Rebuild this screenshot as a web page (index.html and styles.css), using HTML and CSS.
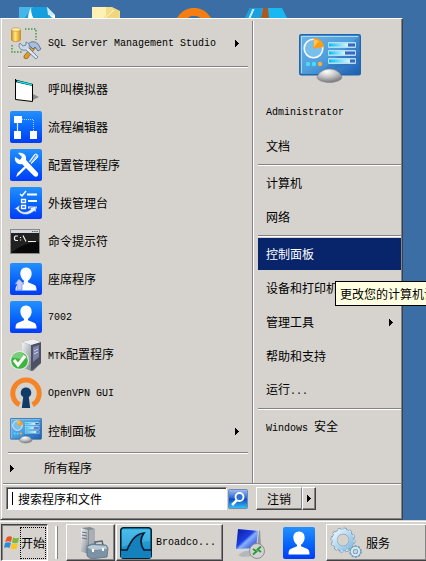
FILE: index.html
```html
<!DOCTYPE html>
<html lang="zh-CN">
<head>
<meta charset="utf-8">
<title>开始</title>
<link rel="stylesheet" href="styles.css">
</head>
<body>
<svg class="defs" aria-hidden="true">
  <defs>
    <linearGradient id="blue" x1="0" y1="0" x2="0" y2="1"><stop offset="0" stop-color="#2490ff"/><stop offset=".5" stop-color="#0868fa"/><stop offset="1" stop-color="#003cf8"/></linearGradient>
    <linearGradient id="panel" x1="0" y1="0" x2="1" y2="1"><stop offset="0" stop-color="#6fb4e6"/><stop offset=".5" stop-color="#4f9ddb"/><stop offset="1" stop-color="#1c5cae"/></linearGradient>
    <linearGradient id="bar" x1="0" y1="0" x2="1" y2="0"><stop offset="0" stop-color="#00bdf5"/><stop offset="1" stop-color="#d8fbff"/></linearGradient>
    <radialGradient id="ball" cx=".4" cy=".2" r=".8"><stop offset="0" stop-color="#fff"/><stop offset=".5" stop-color="#c4c4c6"/><stop offset="1" stop-color="#77777c"/></radialGradient>
    <linearGradient id="gold" x1="0" y1="0" x2="1" y2="0"><stop offset="0" stop-color="#cf8a10"/><stop offset=".4" stop-color="#ffe88a"/><stop offset="1" stop-color="#d59012"/></linearGradient>
    <linearGradient id="steel" x1="0" y1="0" x2="1" y2="1"><stop offset="0" stop-color="#f4f6f8"/><stop offset="1" stop-color="#7d868e"/></linearGradient>
    <linearGradient id="screen" x1="0" y1="0" x2="1" y2="1"><stop offset="0" stop-color="#0b1aa0"/><stop offset=".45" stop-color="#1c3ee0"/><stop offset=".55" stop-color="#88b0ff"/><stop offset="1" stop-color="#0a28c0"/></linearGradient>
    <linearGradient id="shark" x1="0" y1="0" x2="0" y2="1"><stop offset="0" stop-color="#36b5e8"/><stop offset="1" stop-color="#0f7fbd"/></linearGradient>
    <linearGradient id="ice" x1="0" y1="0" x2="1" y2="1"><stop offset="0" stop-color="#e6f3fb"/><stop offset="1" stop-color="#88bce0"/></linearGradient>
    <symbol id="person" viewBox="0 0 32 32">
      <rect width="32" height="32" rx="2" fill="url(#blue)"/>
      <path fill="#fff" d="M16 4.500c4 0 6 3 5.600 7-.3 3-2 5.200-3.600 6.200v1.600l6 2.400c2 .8 2.500 2.300 2.500 5.800h-21c0-3.500.5-5 2.500-5.800l6-2.400v-1.600c-1.600-1-3.300-3.200-3.600-6.200-.4-4 1.600-7 5.600-7z"/>
    </symbol>
    <symbol id="control" viewBox="0 0 62 50">
      <rect x=".75" y=".75" width="60.500" height="40" rx="1.500" fill="url(#panel)" stroke="#1f66ac" stroke-width="1.500"/>
      <path d="M2.500 39V2.500H59" fill="none" stroke="#a7d9fa"/>
      <path d="M60 2v25L20 40z" fill="#1250a0" opacity=".18"/>
      <circle cx="14.500" cy="14.500" r="9.300" fill="#79bfe9" stroke="#f4faff" stroke-width="1.600"/>
      <path d="M14.500 14.500V4c6 0 10 4 10.500 9z" fill="#ff9d12"/><path d="M15 13V5l5 2z" fill="#ffc45a"/>
      <g fill="#b5def5"><rect x="29" y="8" width="28" height="6" rx="1"/><rect x="29" y="16" width="28" height="6" rx="1"/><rect x="29" y="24" width="28" height="6" rx="1"/></g>
      <g fill="url(#bar)"><rect x="30" y="9.500" width="19" height="3"/><rect x="30" y="17.500" width="16" height="3"/><rect x="30" y="25.500" width="21" height="3"/></g>
      <path fill="#3a66c4" d="M49 9.500h7v3h-7zM46 17.500h10v3H46zM51 25.500h5v3h-5z"/>
      <circle cx="9" cy="30" r="2.200" fill="#48dcff"/><circle cx="15" cy="30" r="2.200" fill="#48dcff"/><circle cx="21" cy="30" r="2.200" fill="#ffad35"/>
      <path d="M18 43c2-5 7-8 12.500-8S41 38 43 43c0 3-6 5.500-12.500 5.500S18 46 18 43z" fill="url(#ball)" stroke="#85858a" stroke-width=".6"/>
    </symbol>
    <symbol id="arrow" viewBox="0 0 4 7"><path d="M0 0h1v1h1v1h1v1h1v1H3v1H2v1H1v1H0z"/></symbol>
  </defs>
</svg>

<main class="desktop">
  <div class="shortcuts" aria-hidden="true">
    <svg class="shortcut doc" viewBox="0 0 37 14"><path d="M0 1h28l8 8v5H0z" fill="#159fdf"/><path d="M0 1h14L4 14H0z" fill="#45b6ea"/><path d="M9 14c0-5 1-9 3-12 0 5 1 9 4 12z" fill="#fff"/><path d="M28 1l8 8v5l-5-4z" fill="#fff"/><path d="M28 1l1 8 7 1z" fill="#cfe7f5"/></svg>
    <svg class="shortcut folder" viewBox="0 0 28 12"><path d="M0 0h20l8 4v8H0z" fill="#f3dd87"/><path d="M0 0h14v12H0z" fill="#fff0b3"/><path d="M10 12L22 2l5 2v8z" fill="#efd77e"/><path d="M12 12l10-9" stroke="#fff8d8"/></svg>
    <svg class="shortcut ring" viewBox="0 0 36 12"><path d="M0 12C5 2 12 0 18 0s13 2 18 12H26c-3-4-5-4-8-4s-5 0-8 4z" fill="#f57e12"/></svg>
    <svg class="shortcut tool" viewBox="0 0 42 10"><path d="M5 0h32l5 10H0z" fill="#18b9f2"/><path d="M5 0h12l-1 10H0z" fill="#1c9fdd"/><path d="M8 1L4 10M9 1L5 10" stroke="#e6faff" stroke-width="1"/><path d="M18 0h5l1 10h-8z" fill="#ad5823"/></svg>
  </div>

  <section class="menu" aria-label="开始菜单">
    <div class="columns">
      <nav class="programs" aria-label="程序">
        <a class="program" href="#ssms">
          <svg class="icon" viewBox="0 0 32 32">
            <path d="M15 2h11v11M2 18v7h11" fill="none" stroke="#3f9a45" stroke-width="1.500" stroke-dasharray="1.500 1.500"/>
            <path d="M1.500 2.500v10c0 1.500 2 2 4.500 2s4.500-.5 4.500-2v-10z" fill="url(#gold)" stroke="#b7791a" stroke-width=".6"/><ellipse cx="6" cy="2.500" rx="4.500" ry="1.800" fill="#ffecaa" stroke="#c18a25" stroke-width=".6"/>
            <path d="M14 31l3 1 9-12-3-2-9 11z" fill="#e39c20" stroke="#86571b" stroke-width=".7"/>
            <path d="M18 17c3-3 7-3 10 0l3 5-3 2-3-4-2 2z" fill="#a9bed8" stroke="#46648f" stroke-width=".8"/>
            <path d="M10 16l3 3 3-1v-3c3 1 4 3 3 6l9 9-2 2-10-9c-4 1-7-1-7-5z" fill="#c8d8ea" stroke="#58749b" stroke-width=".8"/><path d="M17 22l10 9" stroke="#f5faff"/>
          </svg>
          <span class="latin">SQL Server Management Studio</span>
          <svg class="arrow"><use href="#arrow"/></svg>
        </a>
        <hr class="rule">
        <a class="program" href="#call">
          <svg class="icon" viewBox="0 0 32 32"><path d="M23 21l6 3-6 3z" fill="#888"/><path d="M5.500 7.500l17 4v17l-17-2z" fill="#fff"/><path d="M5.500 6v20.500l17 2V11.500" fill="none" stroke="#000"/><path d="M5 6.500l18 4.500v2L5 9z" fill="#000"/><path d="M7 8.200l15 3.500" stroke="#00e8e8" stroke-width="1.500"/></svg>
          <span>呼叫模拟器</span>
        </a>
        <a class="program" href="#flow">
          <svg class="icon" viewBox="0 0 32 32"><rect width="32" height="32" rx="2" fill="url(#blue)"/><g fill="#fff"><path d="M4 5h8v7H4zM20 20h7v8h-7zM4 20h7v8H4z"/></g><path d="M7.500 12v8" stroke="#dcebff" stroke-width="1.200"/><path d="M12 8.500h11.500V20" fill="none" stroke="#a8d0ff" stroke-dasharray="1 1"/></svg>
          <span>流程编辑器</span>
        </a>
        <a class="program" href="#config">
          <svg class="icon" viewBox="0 0 32 32"><rect width="32" height="32" rx="2" fill="url(#blue)"/><path d="M19.500 12.500l5-7c2-1 4 0 3 3l-6 6z" fill="#b9d9ff" stroke="#fff"/><path d="M20 14L26 6" stroke="#2f7fe9"/><path d="M18 14l1.500 1.500L9 26l-3 2 1.500-4z" fill="#fff"/><path d="M5 8l5 3 2-3-4-4c5-1 9 2 8 7l12 13c1 3-2 5-4 3L12 15c-4 1-8-2-7-7z" fill="#fff"/></svg>
          <span>配置管理程序</span>
        </a>
        <a class="program" href="#outbound">
          <svg class="icon" viewBox="0 0 32 32"><rect width="32" height="32" rx="2" fill="url(#blue)"/><g fill="none" stroke="#fff"><path d="M10 7l2 2 4-5" stroke-width="1.500"/><path d="M17 7.500h10M18 14h9M18 20.500h9" stroke-width="2"/><path d="M11.500 12.500h4v3h-4zM11.500 18.500h4v3h-4z" stroke-width="1.300"/></g><path d="M4 22l6-4-1 4c3 4 8 4 12 0l-2-1 7-2v6l-2-1c-5 5-13 5-18-2z" fill="#e6f1ff" stroke="#2a63dd" stroke-width=".6"/></svg>
          <span>外拨管理台</span>
        </a>
        <a class="program" href="#cmd">
          <svg class="icon" viewBox="0 0 32 32"><rect x=".5" y="4.500" width="29" height="24" fill="#080808" stroke="#85878b"/><path d="M1 5h28v3H1z" fill="#d4d7dc"/><path d="M22 6.500h6" stroke="#66696e" stroke-dasharray="1.500 .7"/><path d="M1 8h28v9C18 17 10 21 1 28z" fill="#fff" opacity=".1"/><g fill="none" stroke="#eee" stroke-width="1.200"><path d="M8 11H5.500l-1 1v2.500l1 1H8M10.500 12v1M10.500 14.500v1M13 10.500l3 6M18 16.500h8"/></g></svg>
          <span>命令提示符</span>
        </a>
        <a class="program" href="#agent">
          <svg class="icon" viewBox="0 0 32 32"><use href="#person"/><path d="M9 16l5 5h-2v6H7v-6H5z" fill="#c3ccf8" stroke="#6683e8" stroke-width=".6"/></svg>
          <span>座席程序</span>
        </a>
        <a class="program" href="#agent-7002">
          <svg class="icon"><use href="#person"/></svg>
          <span class="latin">7002</span>
        </a>
        <a class="program" href="#mtk">
          <svg class="icon" viewBox="0 0 32 32"><path d="M12 3l11-3 8 3v21l-8 8-11-4z" fill="#6d7077"/><path d="M12 3l9 3v26l-9-4z" fill="url(#steel)"/><path d="M21 6l10-3v21l-10 8z" fill="#4c5062"/><path d="M12 3l11-3 8 3-10 3z" fill="#eef0f2"/><path d="M23 8l6-2v12l-6 5z" fill="#7b82aa"/><path d="M24 12l4-2M24 15l4-2" stroke="#d0d7f2"/><circle cx="9.500" cy="21.500" r="9" fill="#3db53f" stroke="#dce9dc" stroke-width="1.300"/><path d="M1 19c3-7 13-7 16 0-5 3-11-1-16 0z" fill="#a2dea2" opacity=".6"/><path d="M4 21l4 5 7-9" fill="none" stroke="#fff" stroke-width="3"/></svg>
          <span><span class="latin">MTK</span>配置程序</span>
        </a>
        <a class="program" href="#openvpn">
          <svg class="icon" viewBox="0 0 32 32"><path d="M9.500 28.300A13.200 13.200 0 1 1 22.500 28.300" transform="translate(0 -.5)" fill="none" stroke="#f58426" stroke-width="5"/><path d="M16 10.500a5.200 5.200 0 0 1 2.800 9.600L20.200 31h-8.400l1.400-10.900a5.200 5.200 0 0 1 2.800-9.600z" fill="#103a68"/></svg>
          <span class="latin">OpenVPN GUI</span>
        </a>
        <a class="program" href="#control">
          <svg class="icon"><use href="#control"/></svg>
          <span>控制面板</span>
          <svg class="arrow"><use href="#arrow"/></svg>
        </a>
        <hr class="rule">
        <a class="all-programs" href="#all"><svg class="arrow"><use href="#arrow"/></svg><span>所有程序</span></a>
      </nav>

      <nav class="places" aria-label="位置">
        <svg class="picture"><use href="#control"/></svg>
        <a class="place" href="#user"><span class="latin">Administrator</span></a>
        <a class="place" href="#documents">文档</a>
        <hr class="rule">
        <a class="place" href="#computer">计算机</a>
        <a class="place" href="#network">网络</a>
        <hr class="rule">
        <a class="place selected" href="#panel">控制面板</a>
        <div class="tip-anchor">
          <a class="place" href="#devices">设备和打印机</a>
          <div class="tooltip" role="tooltip">更改您的计算机设置</div>
        </div>
        <a class="place" href="#admin"><span>管理工具</span><svg class="arrow"><use href="#arrow"/></svg></a>
        <a class="place" href="#help">帮助和支持</a>
        <a class="place" href="#run"><span>运行<span class="latin">...</span></span></a>
        <hr class="rule">
        <a class="place" href="#security"><span><span class="latin">Windows </span>安全</span></a>
      </nav>
    </div>

    <div class="footer">
      <form class="search">
        <input class="field" type="text" placeholder="搜索程序和文件" aria-label="搜索程序和文件">
        <button class="find" type="button" aria-label="搜索">
          <svg viewBox="0 0 20 20"><defs><linearGradient id="find" x1="0" y1="0" x2="0" y2="1"><stop offset="0" stop-color="#a5bdf2"/><stop offset=".45" stop-color="#2868d8"/><stop offset=".5" stop-color="#1048c4"/><stop offset="1" stop-color="#35c5f5"/></linearGradient></defs><rect x=".5" y=".5" width="19" height="19" rx="1" fill="url(#find)" stroke="#6d8cb5"/><path d="M9 11l-5 5" stroke="#fff" stroke-width="2.500"/><circle cx="11.500" cy="8" r="4" fill="#2f74d4" stroke="#fff" stroke-width="1.800"/></svg>
        </button>
      </form>
      <div class="session">
        <button class="logoff" type="button">注销</button>
        <button class="more" type="button" aria-label="更多选项"><svg class="arrow"><use href="#arrow"/></svg></button>
      </div>
    </div>
  </section>
</main>

<footer class="taskbar">
  <button class="start" type="button">
    <svg class="flag" viewBox="0 0 16 16"><path d="M3 2c2-1 4-1 5 0L7 7C5 6 3 6 1 7z" fill="#ef5124"/><path d="M9 2.500c2 1 4 1 6 0L14 7.500c-2 1-4 1-6 0z" fill="#7bbb35"/><path d="M1 8c2-1 4-1 6 0l-1.500 5c-2-1-4-1-5.500 0z" fill="#2b8bd9"/><path d="M8 8.500c2 1 4 1 6 0l-1.500 5c-2 1-4 1-6 0z" fill="#ffc51b"/></svg>
    <span class="start-label">开始</span>
  </button>
  <span class="grip"></span>
  <button class="task" type="button" aria-label="服务器管理器">
    <svg class="icon" viewBox="0 0 32 32"><path d="M4 1l9-1 5 2v23l-6 2-8-3z" fill="#858b91"/><path d="M4 1l7 2v24l-7-3z" fill="url(#steel)"/><path d="M5 5l5 1M5 8l5 1M5 11l5 1" stroke="#68727b"/><path d="M12 3l6-1v24l-6 1z" fill="#a9afb4"/><path d="M12 18l17-2v14l-17 2z" fill="#dfe3e5" opacity=".5"/><path d="M18 18v-3l7-1 1 4" fill="none" stroke="#566675" stroke-width="1.500"/><path d="M10 19l5-2 14 1 2 3-1 9-16 2-4-3z" fill="#7b93a5" stroke="#526878" stroke-width=".7"/><path d="M10 20l5-2 14 1 1 3-15 1z" fill="#b8cbd7"/><path d="M16 22v3M26 21v3" stroke="#fff" stroke-width="2"/></svg>
  </button>
  <button class="task wide" type="button">
    <svg class="icon" viewBox="0 0 32 32"><rect x=".75" y=".75" width="30.500" height="30.500" rx="3" fill="url(#shark)" stroke="#052233" stroke-width="1.500"/><path d="M2 3h28v11C20 14 12 16 2 20z" fill="#8ddcff" opacity=".25"/><path d="M1 23h6c4-9 8-16 17-17-4 5-4 12 0 17h7v8H1z" fill="#1481bc"/><path d="M1 23h6c4-9 8-16 17-17-4 5-4 12 0 17h7" fill="none" stroke="#061b2c" stroke-width="1.700"/></svg>
    <span class="latin">Broadco...</span>
  </button>
  <button class="pinned" type="button" aria-label="远程桌面连接">
    <svg class="icon" viewBox="0 0 32 32"><path d="M10 24l10-1 1 6-13 1-4-2z" fill="#b4b8bc"/><path d="M3 1l23 2v19L5 25 1 22z" fill="#d2d5dc"/><path d="M4 2l20 2-2 17-20 1z" fill="url(#screen)"/><path d="M26 3l1 18-4 1 2-18z" fill="#9194a0"/><circle cx="23" cy="24" r="7.500" fill="#d1d2d2" stroke="#8d8f91"/><path d="M19 22l3.500 2.500L19 27.500M27 19.500l-3.500 3 3.500 2.500" fill="none" stroke="#269b31" stroke-width="1.800"/></svg>
  </button>
  <button class="pinned" type="button" aria-label="座席程序"><svg class="icon"><use href="#person"/></svg></button>
  <button class="task last" type="button">
    <svg class="icon" viewBox="0 0 32 32"><circle cx="13" cy="13" r="10.500" fill="none" stroke="#7293ad" stroke-width="4" stroke-dasharray="3 2.500"/><circle cx="13" cy="13" r="8.500" fill="none" stroke="#6f94ae" stroke-width="5.500"/><circle cx="13" cy="13" r="10.500" fill="none" stroke="#d4eafa" stroke-width="2.600" stroke-dasharray="2.600 2.900"/><circle cx="13" cy="13" r="8.400" fill="none" stroke="url(#ice)" stroke-width="4.500"/><circle cx="25.500" cy="24.500" r="5" fill="none" stroke="#6f94ae" stroke-width="2.500" stroke-dasharray="2 1.140"/><circle cx="25.500" cy="24.500" r="3.600" fill="none" stroke="#7197b2" stroke-width="3.500"/><circle cx="25.500" cy="24.500" r="3.700" fill="none" stroke="#cce8fa" stroke-width="2.200"/></svg>
    <span>服务</span>
  </button>
</footer>
</body>
</html>
```
FILE: styles.css
```css
* { box-sizing: border-box; }

:root {
  --face: #d6d3ce;
  --shade: #848284;
  --dark: #424142;
  --select: #08246b;
}

body {
  margin: 0;
  height: 100vh;
  overflow: hidden;
  display: flex;
  flex-direction: column;
  background: #3a6ea5;
  color: #000;
  font: 12px/16px "Noto Sans CJK SC", sans-serif;
}

a { color: inherit; text-decoration: none; }

button, input {
  margin: 0;
  padding: 0;
  border: 0;
  border-radius: 0;
  background: none;
  color: inherit;
  font: inherit;
}

svg { display: block; flex: none; }
.defs { position: absolute; width: 0; height: 0; }
.latin { font-family: "Liberation Mono", monospace; font-size: 10px; white-space: pre; }
.program > .latin, .place > .latin { padding-top: 2px; }
.icon { width: 32px; height: 32px; }
.arrow { width: 4px; height: 7px; shape-rendering: crispEdges; }

.rule {
  height: 2px;
  margin: 0;
  border: 0;
  border-top: 1px solid var(--shade);
  border-bottom: 1px solid #fff;
}

/* Desktop */
.desktop { position: relative; flex: none; padding: 18px 23px 0 0; }
.shortcut { position: absolute; }
.doc { left: 19px; top: 6px; width: 37px; height: 14px; }
.folder { left: 92px; top: 7px; width: 28px; height: 12px; }
.ring { left: 176px; top: 8px; width: 36px; height: 12px; }
.tool { left: 245px; top: 8px; width: 42px; height: 10px; }

/* Start menu */
.menu {
  position: relative;
  padding: 2px 1px 2px 2px;
  background: var(--face);
  border: 1px solid #fff;
  border-left-color: var(--face);
  border-right-color: var(--dark);
  border-bottom-color: var(--dark);
  box-shadow: inset 1px 0 #fff, inset -1px -1px var(--shade);
}

.columns { display: flex; border-bottom: 1px solid var(--shade); box-shadow: 0 1px #fff; }

.programs { flex: 1; padding: 3px 4px 3px 5px; }
.programs .rule { margin: 2px 0; }
.programs .rule:first-of-type { margin-top: 4px; }
.program { display: flex; align-items: center; gap: 6px; height: 38px; padding: 0 9px 0 2px; }
.program .arrow { margin-left: auto; }
.all-programs { display: flex; align-items: center; gap: 30px; height: 24px; padding-left: 2px; }

.places {
  width: 149px;
  padding: 13px 0 0 5px;
  border-left: 1px solid var(--shade);
  box-shadow: inset 1px 0 #fff;
}
.picture { width: 62px; height: 50px; margin: 0 auto 11px 41px; }
.place { display: flex; align-items: center; height: 34px; padding: 0 8px; }
.place .arrow { margin-left: auto; }
.places .rule { margin: 1px 0 0; }
.places .selected { height: 32px; margin: 1px 0; background: var(--select); color: #fff; }

.tip-anchor { position: relative; }
.tooltip {
  position: absolute;
  left: 77px;
  top: 10px;
  z-index: 1;
  padding: 3px 4px;
  border: 1px solid #000;
  background: #ffffe1;
  line-height: 17px;
  white-space: nowrap;
}

.footer { display: flex; align-items: flex-start; gap: 8px; padding: 3px 0 7px 3px; }
.search { display: flex; flex: 1; align-items: center; gap: 1px; }
.field {
  flex: 1;
  min-width: 0;
  height: 23px;
  padding: 0 0 0 11px;
  border: 1px solid var(--shade);
  border-right-color: #fff;
  border-bottom-color: #fff;
  background: linear-gradient(#000, #000) 5px center / 1px 13px no-repeat #fff;
  box-shadow: inset 1px 1px var(--dark);
}
.field::placeholder { color: #000; opacity: 1; }
.find svg { width: 20px; height: 20px; }

.session { display: flex; width: 145px; }
.logoff, .more, .task {
  border: 1px solid #fff;
  border-right-color: var(--dark);
  border-bottom-color: var(--dark);
  box-shadow: inset -1px -1px var(--shade);
}
.logoff, .more { height: 23px; }
.logoff { width: 46px; border-right-color: var(--shade); box-shadow: inset 0 -1px var(--shade); }
.more { display: flex; align-items: center; justify-content: center; width: 14px; }

/* Taskbar */
.taskbar {
  display: flex;
  flex: 1;
  align-items: stretch;
  min-height: 40px;
  padding: 3px 0 0 1px;
  background: var(--face);
  border-top: 1px solid var(--face);
  box-shadow: inset 0 1px #fff;
  white-space: nowrap;
}
.start {
  display: flex;
  align-items: center;
  width: 47px;
  padding: 2px 1px 1px 2px;
  border: 1px solid var(--dark);
  border-right-color: #fff;
  border-bottom-color: #fff;
  box-shadow: inset 1px 1px var(--shade);
}
.flag { width: 16px; height: 16px; }
.start-label { display: flex; align-items: center; align-self: stretch; border: 1px dotted #000; }
.grip {
  width: 3px;
  margin: 2px 8px 2px 7px;
  background: #fff;
  border-right: 1px solid var(--shade);
}
.task { display: flex; align-items: center; gap: 4px; padding: 0 3px; }
.task:not(.wide):not(.last) { width: 49px; margin-right: 1px; padding-left: 10px; }
.wide { width: 107px; }
.pinned { margin-left: 11px; }
.pinned + .pinned { margin-left: 17px; }
.last { flex: 1; margin-left: 11px; border-right: 0; }
```
